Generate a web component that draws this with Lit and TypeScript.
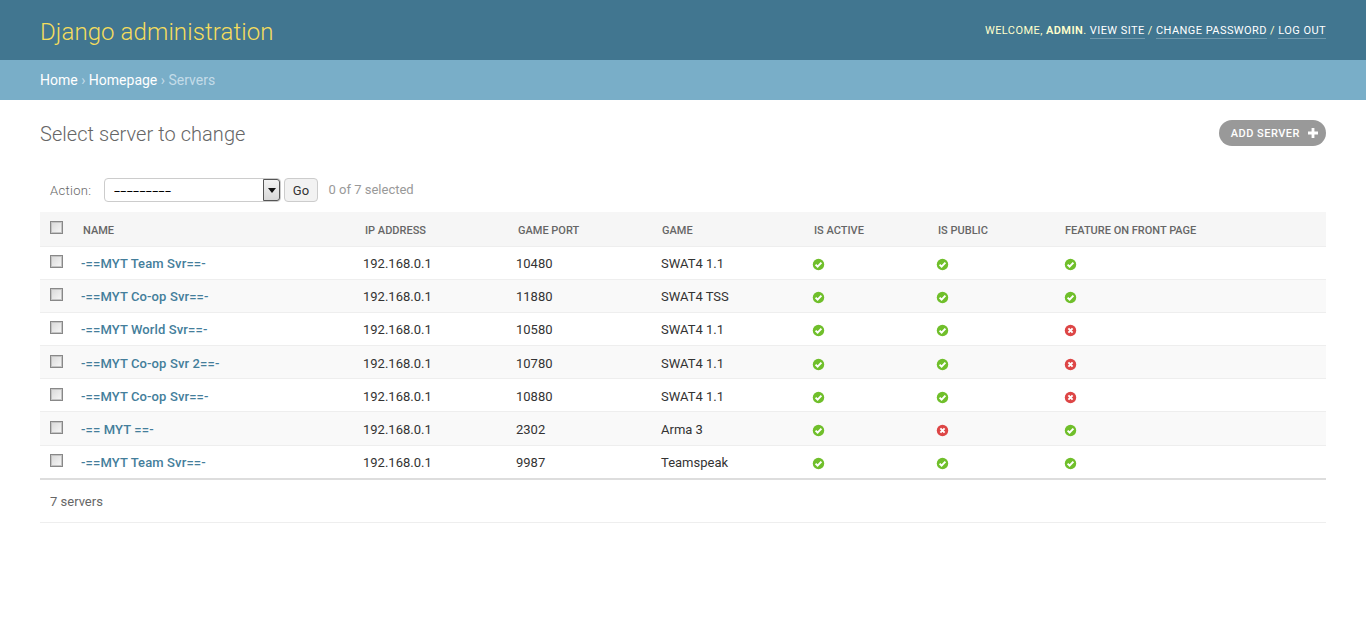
import { LitElement, html, css, svg } from "lit";
import { customElement } from "lit/decorators.js";

const rows: [string, string, string, string, number, number, number][] = [
  ["-==MYT Team Svr==-", "192.168.0.1", "10480", "SWAT4 1.1", 1, 1, 1],
  ["-==MYT Co-op Svr==-", "192.168.0.1", "11880", "SWAT4 TSS", 1, 1, 1],
  ["-==MYT World Svr==-", "192.168.0.1", "10580", "SWAT4 1.1", 1, 1, 0],
  ["-==MYT Co-op Svr 2==-", "192.168.0.1", "10780", "SWAT4 1.1", 1, 1, 0],
  ["-==MYT Co-op Svr==-", "192.168.0.1", "10880", "SWAT4 1.1", 1, 1, 0],
  ["-== MYT ==-", "192.168.0.1", "2302", "Arma 3", 1, 0, 1],
  ["-==MYT Team Svr==-", "192.168.0.1", "9987", "Teamspeak", 1, 1, 1],
];

const yes = svg`<svg class="ico" viewBox="0 0 13 13"><circle cx="6.5" cy="6.5" r="5.7" fill="#70bf2b"/><path d="M3.6 6.6 5.6 8.6 9.4 4.6" fill="none" stroke="#fff" stroke-width="2"/></svg>`;
const no = svg`<svg class="ico" viewBox="0 0 13 13"><circle cx="6.5" cy="6.5" r="5.7" fill="#dd4646"/><path d="M4.4 4.4 8.6 8.6M8.6 4.4 4.4 8.6" fill="none" stroke="#fff" stroke-width="2"/></svg>`;

@customElement("app-root")
export class AppRoot extends LitElement {
  static styles = css`
    :host { display: block; font-family: Roboto, "Liberation Sans", sans-serif; font-size: 14px; color: #333; background: #fff; min-height: 631px; }
    a { text-decoration: none; }
    .header { height: 60px; box-sizing: border-box; background: #417690; padding: 0 40px; display: flex; justify-content: space-between; align-items: center; }
    .brand { font-size: 24px; font-weight: 300; color: #f5dd5d; letter-spacing: 0.1px; margin-top: 4px; }
    .tools { font-size: 11px; font-weight: 400; letter-spacing: 0.44px; text-transform: uppercase; color: #ffc; margin-top: 1px; }
    .tools strong { font-weight: 600; }
    .tools a { color: #fff; border-bottom: 1px solid rgba(255,255,255,0.25); padding-bottom: 1px; }
    .crumbs { height: 40px; box-sizing: border-box; background: #79aec8; padding: 0 40px; display: flex; align-items: center; font-size: 14px; font-weight: 400; color: #c4dce8; white-space: pre; }
    .crumbs a { color: #fff; font-weight: 400; }
    .content { padding: 20px 40px 0; }
    .title-row { display: flex; justify-content: space-between; align-items: flex-start; }
    h1 { margin: 0; font-size: 20px; font-weight: 300; color: #666; line-height: 28px; letter-spacing: 0.05px; }
    .add { display: flex; align-items: center; gap: 8px; height: 26px; box-sizing: border-box; padding: 0 8px 0 12px; border-radius: 13px; background: #999; color: #fff; font-size: 11px; font-weight: 500; letter-spacing: 0.5px; text-transform: uppercase; }
    .plus { width: 10px; height: 10px; display: block; }
    .actions { display: flex; align-items: center; height: 24px; margin-top: 30px; padding-left: 10px; font-size: 13px; font-weight: 300; color: #666; }
    .actions label { width: 54px; letter-spacing: 0.3px; }
    .select { width: 177px; height: 24px; box-sizing: border-box; border: 1px solid #ccc; border-radius: 4px; display: flex; align-items: center; justify-content: space-between; padding: 0 0 0 9px; color: #000; font-size: 13px; font-weight: 400; background: #fff; }
    .dashes { display: inline-block; letter-spacing: 0.2px; transform: scaleX(1.68); transform-origin: left center; }
    .arrow { width: 17px; height: 22px; box-sizing: border-box; border: 1px solid #555; background: linear-gradient(#f2f2f2, #d8d8d8); display: flex; align-items: center; justify-content: center; border-radius: 0 3px 3px 0; }
    .arrow i { width: 0; height: 0; border: 4px solid transparent; border-top: 5px solid #111; border-bottom: 0; display: block; }
    .go { margin-left: 3px; width: 34px; height: 24px; box-sizing: border-box; border: 1px solid #ccc; border-radius: 4px; background: #f2f2f2; color: #333; font-size: 13px; display: flex; align-items: center; justify-content: center; padding-top: 1px; font-weight: 400; }
    .count { margin-left: 10.5px; color: #999; font-weight: 400; margin-top: -2px; }
    table { table-layout: fixed; width: 1286px; border-collapse: collapse; margin-top: 10px; font-size: 13px; }
    th { background: #f6f6f6; height: 34px; padding: 4px 0 0 11px; text-align: left; font-size: 11px; font-weight: 500; color: #666; text-transform: uppercase; border-bottom: 1px solid #eee; box-sizing: border-box; }
    td { padding: 2px 0 0 9px; height: 33.2px; box-sizing: border-box; border-bottom: 1px solid #eee; color: #333; vertical-align: middle; }
    tr:nth-child(even) td { background: #f9f9f9; }
    tr:last-child td { border-bottom: 2px solid #ddd; height: 34.2px; }
    td a { color: #447e9b; font-weight: 500; letter-spacing: 0.12px; }
    td:nth-child(5), td:nth-child(8) { padding-left: 10px; }
    th.chk { padding: 0 0 2px 10px; }
    td.chk { padding: 0 0 2px 10px; }
    .box { display: block; width: 13px; height: 13px; box-sizing: border-box; border: 1px solid #888; box-shadow: inset 0 0 0 1px #c4c4c4; background: linear-gradient(135deg, #d8d8d8, #f8f8f8); }
    .ico { display: block; width: 13px; height: 13px; margin-top: 2px; }
    .c0 { width: 32px; } .c1 { width: 282px; } .c2 { width: 153px; } .c3 { width: 144px; } .c4 { width: 152px; } .c5 { width: 124px; } .c6 { width: 127px; }
    .footer { height: 43px; box-sizing: border-box; border-bottom: 1px solid #eee; display: flex; align-items: center; padding-left: 10px; font-size: 13px; color: #666; }
  `;

  render() {
    return html`
      <div class="header">
        <div class="brand">Django administration</div>
        <div class="tools">Welcome, <strong>admin</strong>. <a href="#">View site</a> / <a href="#">Change password</a> / <a href="#">Log out</a></div>
      </div>
      <div class="crumbs"><a href="#">Home</a> › <a href="#">Homepage</a> › Servers</div>
      <div class="content">
        <div class="title-row">
          <h1>Select server to change</h1>
          <a class="add" href="#">Add server
            <svg class="plus" viewBox="0 0 10 10"><path d="M3.6 0h2.8v3.6H10v2.8H6.4V10H3.6V6.4H0V3.6h3.6z" fill="#fff"/></svg>
          </a>
        </div>
        <div class="actions">
          <label>Action:</label>
          <div class="select"><span class="dashes">---------</span><span class="arrow"><i></i></span></div>
          <div class="go">Go</div>
          <span class="count">0 of 7 selected</span>
        </div>
        <table>
          <colgroup><col class="c0"/><col class="c1"/><col class="c2"/><col class="c3"/><col class="c4"/><col class="c5"/><col class="c6"/><col/></colgroup>
          <thead><tr>
            <th class="chk"><span class="box"></span></th>
            <th>Name</th><th>IP address</th><th>Game port</th><th>Game</th><th>Is active</th><th>Is public</th><th>Feature on front page</th>
          </tr></thead>
          <tbody>
            ${rows.map((r) => html`<tr>
              <td class="chk"><span class="box"></span></td>
              <td><a href="#">${r[0]}</a></td><td>${r[1]}</td><td>${r[2]}</td><td>${r[3]}</td>
              <td>${r[4] ? yes : no}</td><td>${r[5] ? yes : no}</td><td>${r[6] ? yes : no}</td>
            </tr>`)}
          </tbody>
        </table>
        <div class="footer">7 servers</div>
      </div>
    `;
  }
}
